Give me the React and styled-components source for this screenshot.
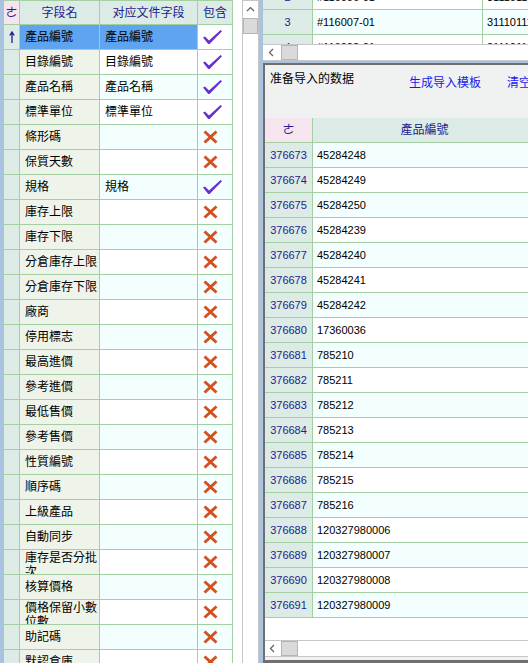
import React from "react";
import styled, { createGlobalStyle } from "styled-components";

const GREEN = "#a3cfa3";
const HEAD = "#dcebe5";
const NAVY = "#1d1d8e";
const CYAN = "#f3fffe";
const DESK = "#a8c2df";

const GlobalStyle = createGlobalStyle`
  html, body {
    margin: 0;
    padding: 0;
    overflow: hidden;
    background: ${DESK};
  }
  body {
    font-family: "Liberation Sans", "Noto Sans CJK TC", sans-serif;
    font-size: 12px;
  }
`;

const Window = styled.div`
  display: flex;
  width: 528px;
  height: 663px;
  background: ${DESK};
  overflow: hidden;
`;

const LeftPane = styled.div`
  display: flex;
  flex-shrink: 0;
  margin-left: 3px;
  width: 256px;
  background: #fff;
`;

const FieldGrid = styled.div`
  width: 230px;
  flex-shrink: 0;
  box-sizing: border-box;
  border-left: 1px solid ${GREEN};
  border-top: 1px solid ${GREEN};
  overflow: hidden;
`;

const Row = styled.div`
  display: grid;
  grid-template-columns: ${(p) => p.$cols};
  height: ${(p) => p.$h || 25}px;
`;

const Cell = styled.div`
  box-sizing: border-box;
  min-width: 0;
  display: flex;
  align-items: center;
  padding: 0 2px 0 5px;
  border-right: 1px solid ${GREEN};
  border-bottom: 1px solid ${GREEN};
  background: ${(p) => p.$bg || "#fff"};
  color: #000;
  line-height: 14px;
  white-space: nowrap;
  overflow: hidden;
`;

const HeadCell = styled(Cell)`
  justify-content: center;
  padding: 0;
  background: ${HEAD};
  color: ${NAVY};
`;

const Corner = styled(HeadCell)`
  background: #f6e4ef;
`;

const RowHead = styled(Cell)`
  justify-content: center;
  padding: 0;
  background: ${HEAD};
  color: ${NAVY};
  font-size: 11px;
`;

const NameCell = styled(Cell)`
  align-items: ${(p) => (p.$wrap ? "flex-start" : "center")};
  padding-top: ${(p) => (p.$wrap ? "1px" : "0")};
  white-space: ${(p) => (p.$wrap ? "normal" : "nowrap")};
`;

const FlagCell = styled(Cell)`
  padding-left: 5px;
`;

const NumCell = styled(Cell)`
  padding-left: 4px;
  font-size: 11px;
`;

const VScroll = styled.div`
  margin-left: 9px;
  width: 17px;
  flex-shrink: 0;
  box-sizing: border-box;
  border: 1px solid #c6c6c6;
  border-bottom: none;
  display: flex;
  flex-direction: column;
  background: #fff;
`;

const ArrowBox = styled.div`
  width: ${(p) => p.$w || 15}px;
  height: ${(p) => p.$hgt || 15}px;
  flex-shrink: 0;
  display: flex;
  align-items: center;
  justify-content: center;
`;

const VThumb = styled.div`
  margin-top: 1px;
  height: 16px;
  box-sizing: border-box;
  background: #dadada;
  border: 1px solid #b5b5b5;
`;

const HScroll = styled.div`
  height: 17px;
  flex-shrink: 0;
  box-sizing: border-box;
  display: flex;
  border-top: 1px solid #c6c6c6;
  border-bottom: 1px solid #c6c6c6;
  background: #fff;
`;

const HThumb = styled.div`
  margin-left: 1px;
  width: 17px;
  box-sizing: border-box;
  background: #dadada;
  border: 1px solid #b5b5b5;
`;

const RightPane = styled.div`
  margin-left: 4px;
  flex: 1;
  min-width: 0;
  display: flex;
  flex-direction: column;
  overflow: hidden;
`;

const SourceGrid = styled.div`
  height: 44px;
  flex-shrink: 0;
  background: #fff;
  overflow: hidden;
`;

const Scrolled = styled.div`
  margin-top: -15px;
`;

const ImportPanel = styled.div`
  flex: 1;
  min-height: 0;
  margin-top: 2px;
  display: flex;
  flex-direction: column;
  background: #f0f1f1;
  border-left: 2px solid #6f6f6f;
  border-top: 2px solid #6f6f6f;
  border-bottom: 3px solid #6f6f6f;
`;

const Toolbar = styled.div`
  height: 53px;
  flex-shrink: 0;
  box-sizing: border-box;
  display: flex;
  align-items: flex-start;
  padding: 5px 0 0 5px;
  white-space: nowrap;
  font-family: "Noto Sans CJK SC", sans-serif;
  line-height: 16px;
`;

const Title = styled.div`
  color: #000;
`;

const Link = styled.a`
  margin-left: ${(p) => p.$gap}px;
  margin-top: 4px;
  color: #1818f0;
  text-decoration: none;
  cursor: pointer;
`;

const ImportBody = styled.div`
  flex: 1;
  min-height: 0;
  background: #fff;
  overflow: hidden;
`;

const BottomScroll = styled.div`
  margin-bottom: 3px;
`;

const Check = () => (
  <svg width="19" height="14" viewBox="0 0 19 14">
    <path d="M0 7.6 L2 6.4 L6 10.6 L17.6 0 L19 1.2 L6.6 14 L5.2 14 Z" fill="#6a2fcf" />
  </svg>
);

const Cross = () => (
  <svg width="15" height="14" viewBox="0 0 15 14">
    <path d="M1.5 1.5 L13.5 12.5 M13.5 1.5 L1.5 12.5" stroke="#d4511e" strokeWidth="3" fill="none" />
  </svg>
);

const UpArrow = () => (
  <svg width="6" height="12" viewBox="0 0 6 12">
    <path d="M3 1 V12 M0.8 4.5 L3 1 L5.2 4.5" stroke={NAVY} strokeWidth="1.3" fill="none" />
  </svg>
);

const Chevron = ({ dir }) => (
  <svg width="9" height="9" viewBox="0 0 9 9">
    <path
      d={dir === "up" ? "M1 6 L4.5 2.5 L8 6" : "M6 1 L2.5 4.5 L6 8"}
      stroke="#606060"
      strokeWidth="1.2"
      fill="none"
    />
  </svg>
);

const fields = [
  ["產品編號", "產品編號", true],
  ["目錄編號", "目錄編號", true],
  ["產品名稱", "產品名稱", true],
  ["標準單位", "標準單位", true],
  ["條形碼", "", false],
  ["保質天數", "", false],
  ["規格", "規格", true],
  ["庫存上限", "", false],
  ["庫存下限", "", false],
  ["分倉庫存上限", "", false],
  ["分倉庫存下限", "", false],
  ["廠商", "", false],
  ["停用標志", "", false],
  ["最高進價", "", false],
  ["參考進價", "", false],
  ["最低售價", "", false],
  ["參考售價", "", false],
  ["性質編號", "", false],
  ["順序碼", "", false],
  ["上級產品", "", false],
  ["自動同步", "", false],
  ["庫存是否分批次", "", false],
  ["核算價格", "", false],
  ["價格保留小數位數", "", false],
  ["助記碼", "", false],
  ["默認倉庫", "", false],
];

const sourceRows = [
  ["2", "#116006-01", "31110110"],
  ["3", "#116007-01", "31110111"],
  ["4", "#116008-01", "31110112"],
];

const importRows = [
  ["376673", "45284248"],
  ["376674", "45284249"],
  ["376675", "45284250"],
  ["376676", "45284239"],
  ["376677", "45284240"],
  ["376678", "45284241"],
  ["376679", "45284242"],
  ["376680", "17360036"],
  ["376681", "785210"],
  ["376682", "785211"],
  ["376683", "785212"],
  ["376684", "785213"],
  ["376685", "785214"],
  ["376686", "785215"],
  ["376687", "785216"],
  ["376688", "120327980006"],
  ["376689", "120327980007"],
  ["376690", "120327980008"],
  ["376691", "120327980009"],
];

const FIELD_COLS = "16px 80px 98px 35px";
const SOURCE_COLS = "50px 170px 200px";
const IMPORT_COLS = "48px 224px";

const App = () => {
  return (
    <Window>
      <GlobalStyle />
      <LeftPane>
        <FieldGrid>
          <Row $cols={FIELD_COLS} $h={24}>
            <Corner>ㄜ</Corner>
            <HeadCell>字段名</HeadCell>
            <HeadCell>对应文件字段</HeadCell>
            <HeadCell>包含</HeadCell>
          </Row>
          {fields.map(([name, mapped, on], i) => {
            const selected = i === 0;
            const stripe = i % 2 === 0 ? CYAN : "#fff";
            return (
              <Row key={name} $cols={FIELD_COLS}>
                <RowHead>{selected ? <UpArrow /> : null}</RowHead>
                <NameCell $bg={selected ? "#5fa4ee" : "#eef4ea"} $wrap={name.length > 6}>
                  <span>{name}</span>
                </NameCell>
                <Cell $bg={selected ? "#5fa4ee" : stripe}>{mapped}</Cell>
                <FlagCell $bg={selected ? "#fff" : stripe}>{on ? <Check /> : <Cross />}</FlagCell>
              </Row>
            );
          })}
        </FieldGrid>
        <VScroll>
          <ArrowBox $w={15} $hgt={16}>
            <Chevron dir="up" />
          </ArrowBox>
          <VThumb />
        </VScroll>
      </LeftPane>

      <RightPane>
        <SourceGrid>
          <Scrolled>
            {sourceRows.map(([n, code, num], i) => (
              <Row key={n} $cols={SOURCE_COLS}>
                <RowHead>{n}</RowHead>
                <NumCell $bg={i === 1 ? CYAN : "#fff"}>{code}</NumCell>
                <NumCell $bg={i === 1 ? CYAN : "#fff"}>{num}</NumCell>
              </Row>
            ))}
          </Scrolled>
        </SourceGrid>
        <HScroll>
          <ArrowBox $w={17}>
            <Chevron dir="left" />
          </ArrowBox>
          <HThumb />
        </HScroll>

        <ImportPanel>
          <Toolbar>
            <Title>准备导入的数据</Title>
            <Link $gap={55}>生成导入模板</Link>
            <Link $gap={26}>清空</Link>
          </Toolbar>
          <ImportBody>
            <Row $cols={IMPORT_COLS}>
              <Corner>ㄜ</Corner>
              <HeadCell>產品編號</HeadCell>
            </Row>
            {importRows.map(([id, code], i) => (
              <Row key={id} $cols={IMPORT_COLS}>
                <RowHead>{id}</RowHead>
                <NumCell $bg={i % 2 === 0 ? CYAN : "#fff"}>{code}</NumCell>
              </Row>
            ))}
          </ImportBody>
          <BottomScroll>
            <HScroll>
              <ArrowBox $w={15}>
                <Chevron dir="left" />
              </ArrowBox>
              <HThumb />
            </HScroll>
          </BottomScroll>
        </ImportPanel>
      </RightPane>
    </Window>
  );
};

export default App;
